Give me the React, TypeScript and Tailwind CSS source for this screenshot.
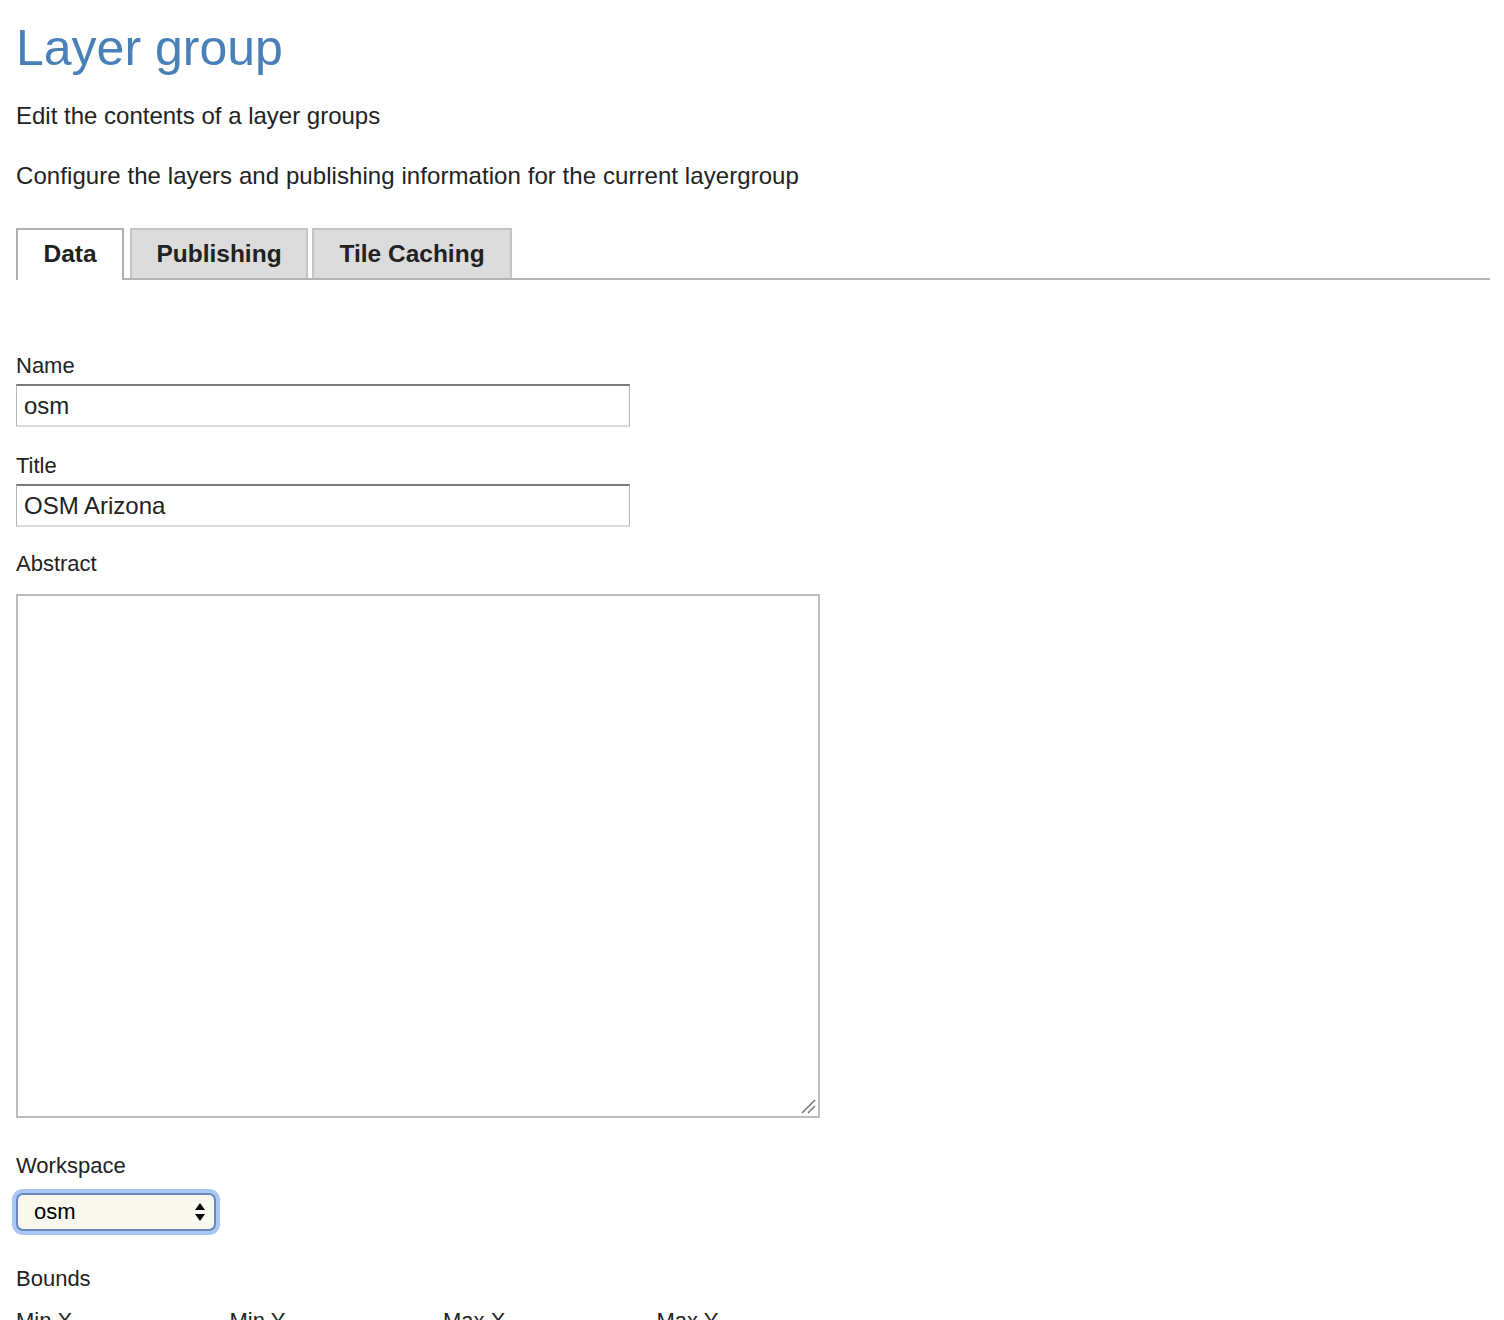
import React from "react";

const tabs = [
  { label: "Data", active: true, gap: "" },
  { label: "Publishing", active: false, gap: "ml-[6px]" },
  { label: "Tile Caching", active: false, gap: "ml-[4px]" },
];

const bounds = ["Min X", "Min Y", "Max X", "Max Y"];

function Label({ children, className = "" }: { children: React.ReactNode; className?: string }) {
  return <div className={`text-[22px] leading-[26px] text-[#222] ${className}`}>{children}</div>;
}

function TextInput({ value }: { value: string }) {
  return (
    <input
      readOnly
      value={value}
      className="mt-[5px] block h-[43px] w-[614px] border-x border-t-2 border-b-2 border-x-[#b4b4b4] border-t-[#7a7a7a] border-b-[#dadada] bg-white pl-[7px] text-[24px] text-[#222] outline-none"
    />
  );
}

export default function App() {
  return (
    <div className="min-h-[1320px] bg-white pl-4 pr-[14px] font-['Liberation_Sans',Arial,sans-serif] text-[#222]">
      <h1 className="pt-[18px] text-[50px] leading-[60px] font-normal text-[#4a80b8]">Layer group</h1>
      <p className="mt-[23px] text-[24px] leading-[30px]">Edit the contents of a layer groups</p>
      <p className="mt-[30px] text-[24px] leading-[30px] tracking-[0.07px]">
        Configure the layers and publishing information for the current layergroup
      </p>

      <div className="mt-[37px] flex items-end border-b-2 border-[#b5b5b5]">
        {tabs.map((t) =>
          t.active ? (
            <div
              key={t.label}
              className="-mb-[2px] flex h-[52px] w-[108px] items-center justify-center border-2 border-b-0 border-[#b0b0b0] bg-white pb-[2px] text-[24.5px] font-bold"
            >
              {t.label}
            </div>
          ) : (
            <div
              key={t.label}
              className={`${t.gap} flex h-[50px] items-center justify-center border-2 border-b-0 border-[#c4c4c4] bg-[#dcdcdc] text-[24.5px] font-bold ${
                t.label === "Publishing" ? "w-[178px]" : "w-[200px]"
              }`}
            >
              {t.label}
            </div>
          )
        )}
      </div>

      <div className="mt-[73px]">
        <Label>Name</Label>
        <TextInput value="osm" />

        <Label className="mt-[26px]">Title</Label>
        <TextInput value="OSM Arizona" />

        <Label className="mt-[24px]">Abstract</Label>
        <div className="relative mt-[17px] w-[804px]">
          <textarea
            readOnly
            className="block h-[524px] w-[804px] resize-none border-2 border-[#bcbcbc] bg-white outline-none"
          />
          <svg width="16" height="16" viewBox="0 0 16 16" className="absolute right-[4px] bottom-[4px]">
            <path d="M2 15 L15 2" stroke="#6f6f6f" strokeWidth="1.5" />
            <path d="M8 15 L15 8" stroke="#6f6f6f" strokeWidth="1.5" />
          </svg>
        </div>

        <Label className="mt-[35px]">Workspace</Label>
        <div className="mt-[14px] flex h-[38px] w-[200px] items-center justify-between rounded-[7px] border-2 border-[#6a86bf] bg-[#f9f8ee] pr-[8px] pl-[16px] shadow-[0_0_0_4px_#a9c6f4]">
          <span className="text-[22px] leading-none text-black">osm</span>
          <svg width="12" height="22" viewBox="0 0 12 22" className="text-black">
            <path d="M6 2 L11 9 H1 Z" fill="currentColor" />
            <path d="M6 20 L11 13 H1 Z" fill="currentColor" />
          </svg>
        </div>

        <Label className="mt-[35px]">Bounds</Label>
        <div className="mt-[16px] flex">
          {bounds.map((b) => (
            <div key={b} className="w-[213.5px] text-[22px] leading-[26px] text-[#222]">
              {b}
            </div>
          ))}
        </div>
      </div>
    </div>
  );
}
